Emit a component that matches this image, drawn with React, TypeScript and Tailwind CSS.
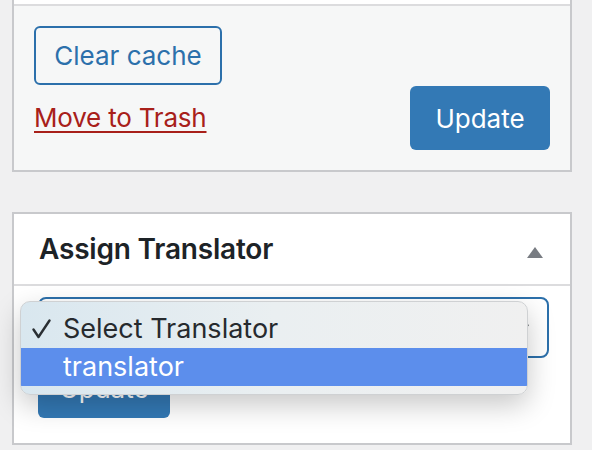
import { ChevronDown } from 'lucide-react';

const font = { fontFamily: 'Inter, "Liberation Sans", sans-serif' };

const CheckMark = () => (
  <svg width="19" height="20" viewBox="0 0 19 20" className="shrink-0">
    <polyline
      points="1.5,10.5 6.5,18 17.5,1.5"
      fill="none"
      stroke="#2a2f33"
      strokeWidth="2.4"
      strokeLinecap="round"
      strokeLinejoin="round"
    />
  </svg>
);

const PublishBox = () => (
  <div className="w-[560px] border-x-2 border-b-2 border-[#c8c9cc]">
    <div className="h-[4px] bg-white"></div>
    <div className="border-t-2 border-[#dcdcde] bg-[#f6f7f7] p-[20px]">
      <button className="flex justify-center items-center w-[188px] h-[59px] rounded-[6px] border-2 border-[#2c70ab] bg-[#f6f7f7] text-[26px] text-[#2c70ab]">
        Clear cache
      </button>
      <div className="flex justify-between items-center mt-[1px]">
        <a className="text-[26px] leading-[32px] text-[#a8201a] underline decoration-2 underline-offset-[4px] tracking-[-0.2px]">
          Move to Trash
        </a>
        <button className="flex justify-center items-center w-[140px] h-[64px] rounded-[6px] bg-[#3379b5] text-[26px] text-white">
          Update
        </button>
      </div>
    </div>
  </div>
);

const TranslatorBox = () => (
  <div className="w-[560px] mt-[40px] border-2 border-[#c8c9cc] bg-white">
    <div className="flex justify-between items-center h-[72px] pl-[25px] pr-[27px] border-b-2 border-[#dcdcde]">
      <h2 className="text-[28px] font-semibold text-[#1d2327] tracking-[-0.2px]">Assign Translator</h2>
      <svg width="16" height="11" viewBox="0 0 16 11" className="mt-[6px]">
        <polygon points="8,0 16,11 0,11" fill="#787c82" />
      </svg>
    </div>
    <div className="relative pt-[11px] pb-[25px] px-[24px]">
      <div className="flex justify-end items-center w-[511px] h-[61px] pr-[14px] rounded-[8px] border-2 border-[#2c70ab]">
        <ChevronDown className="w-[22px] h-[22px] text-[#2c3338]" strokeWidth={2.5} />
      </div>
      <button className="flex justify-center items-center w-[132px] h-[60px] rounded-[6px] bg-[#3379b5] text-[26px] text-white">
        Update
      </button>

      <div className="absolute top-[15px] left-[6px] w-[508px] py-[8px] rounded-[10px] border border-[#cfd1d3] bg-linear-to-r from-[#d9e7ef] via-[#eaeff1] to-[#f0f0f0] shadow-[0_10px_28px_rgba(0,0,0,0.22)] overflow-hidden">
        <div className="flex items-center h-[38px] pl-[11px] gap-[12px] text-[27px] text-[#262a2e]">
          <CheckMark />
          <span>Select Translator</span>
        </div>
        <div className="flex items-center h-[38px] pl-[42px] bg-[#5c8eec] text-[27px] text-white">
          translator
        </div>
      </div>
    </div>
  </div>
);

export default function App() {
  return (
    <div className="w-[592px] h-[450px] overflow-hidden bg-[#f0f0f1] pl-[12px]" style={font}>
      <PublishBox />
      <TranslatorBox />
    </div>
  );
}
